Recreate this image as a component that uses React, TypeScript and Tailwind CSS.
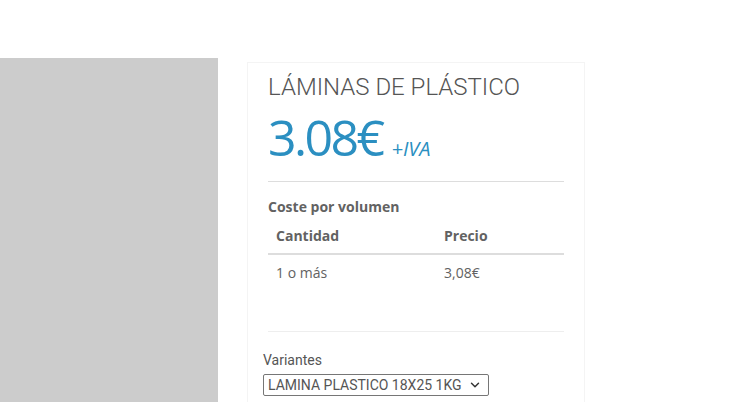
import { ChevronDown } from "lucide-react";

const rows = [{ qty: "1 o más", price: "3,08€" }];

const App = () => {
  return (
    <div className="flex h-[402px] w-[744px] overflow-hidden bg-white pt-[58px]">
      <div className="h-[344px] w-[218px] shrink-0 bg-[#cccccc]" />
      <div className="ml-[29px] mt-[4px] h-[400px] w-[338px] shrink-0 border-x border-t border-[#f4f4f4] px-[15px]">
        <div className="px-[5px]">
          <h1 className="mt-[6px] font-['Roboto'] text-[24px] font-light leading-[36px] text-[#555]">
            LÁMINAS DE PLÁSTICO
          </h1>
          <div className="flex items-baseline gap-[9px] font-['Open_Sans'] text-[#2b8fc1]">
            <span className="text-[50px] font-normal leading-[64px] tracking-[-2.6px]">3.08€</span>
            <span className="text-[20px] italic">+IVA</span>
          </div>
          <div className="mt-[12px] border-t border-[#dddddd]" />
          <div className="mt-[15px] font-['Open_Sans'] text-[14px] font-bold leading-[20px] text-[#626262]">
            Coste por volumen
          </div>
          <table className="mt-[9px] w-full font-['Open_Sans'] text-[14px] text-[#626262]">
            <thead>
              <tr className="border-b-2 border-[#dddddd]">
                <th className="w-[168px] px-[8px] pb-[7px] text-left font-bold leading-[20px]">Cantidad</th>
                <th className="px-[8px] pb-[7px] text-left font-bold leading-[20px]">Precio</th>
              </tr>
            </thead>
            <tbody>
              {rows.map((r) => (
                <tr key={r.qty}>
                  <td className="px-[8px] pt-[8px] leading-[20px]">{r.qty}</td>
                  <td className="px-[8px] pt-[8px] leading-[20px]">{r.price}</td>
                </tr>
              ))}
            </tbody>
          </table>
          <div className="mt-[48px] border-t border-[#eeeeee]" />
        </div>
        <div className="mt-[18px] font-['Roboto'] text-[14px] leading-[20px] text-[#555]">Variantes</div>
        <div className="mt-[4px] flex h-[22px] w-[226px] items-center justify-between rounded-[2px] border border-[#767676] pl-[4px] pr-[6px] font-['Roboto'] text-[14px] text-[#555]">
          <span>LAMINA PLASTICO 18X25 1KG</span>
          <ChevronDown size={14} strokeWidth={2.5} className="text-[#333]" />
        </div>
      </div>
    </div>
  );
};

export default App;
